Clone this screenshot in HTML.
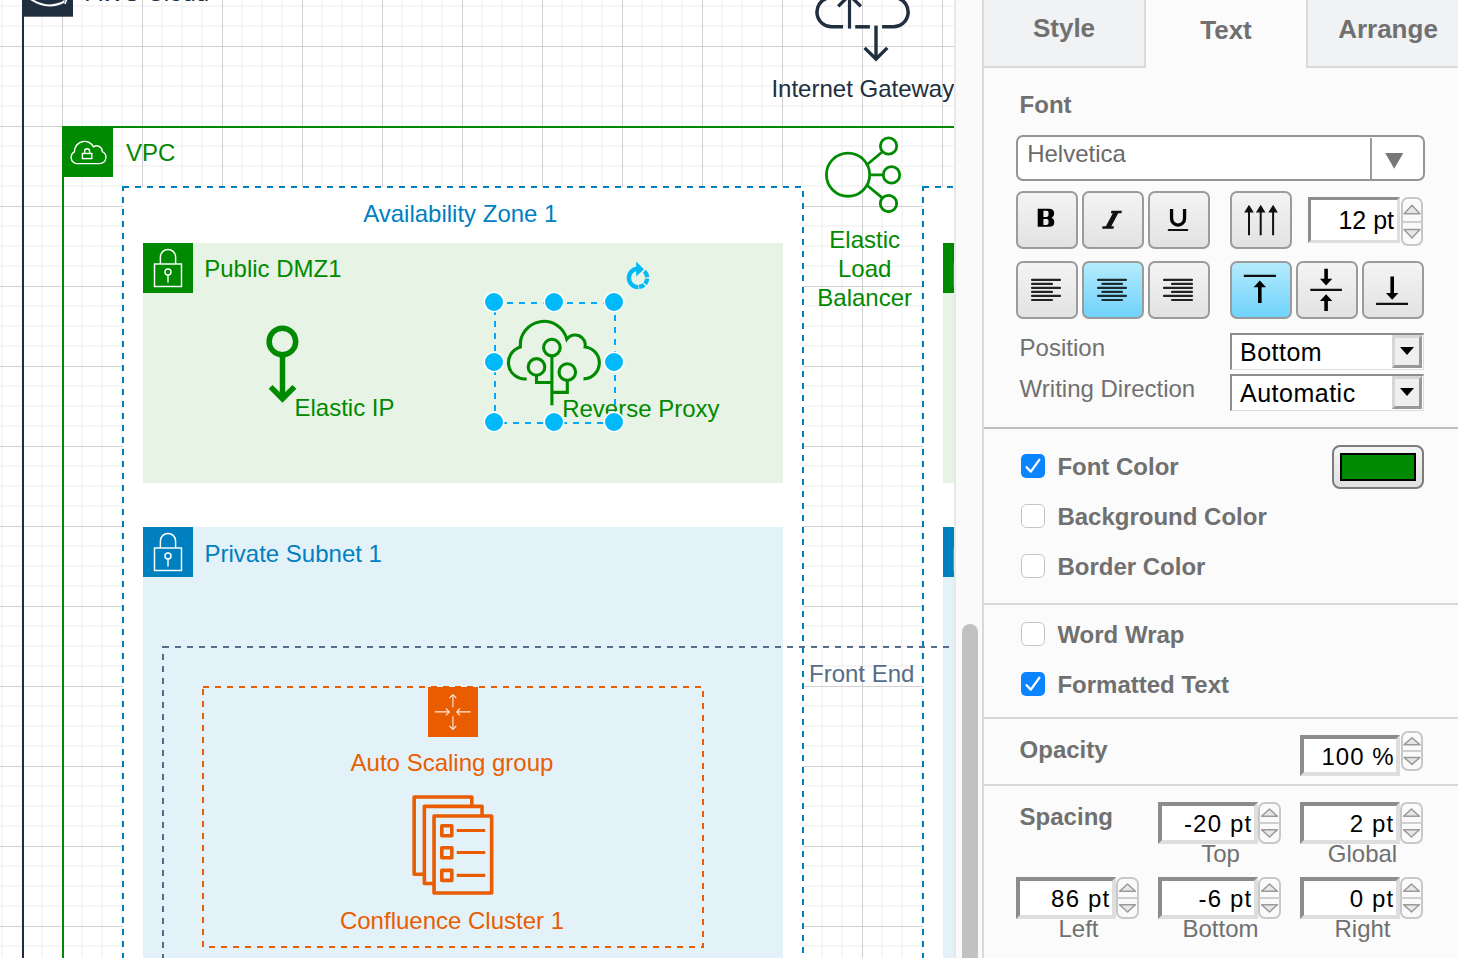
<!DOCTYPE html>
<html><head><meta charset="utf-8">
<style>
html,body{margin:0;padding:0;width:1458px;height:958px;overflow:hidden;background:#fbfbfb;font-family:"Liberation Sans", sans-serif;}
.a{position:absolute;}
svg text{font-family:"Liberation Sans", sans-serif;}
.tab{font-size:26px;font-weight:bold;color:#707070;text-align:center;line-height:0;height:0;}
.lbl{font-size:24px;color:#707070;line-height:0;height:0;white-space:nowrap}
.lblb{font-size:24px;font-weight:bold;color:#707070;line-height:0;height:0;white-space:nowrap}
.val{font-size:25px;color:#000;line-height:0;height:0;white-space:nowrap}
.sub{font-size:24px;color:#707070;line-height:0;height:0;text-align:center}
.btn{border:2px solid #9b9b9b;border-radius:7px;overflow:hidden}
.btn svg{display:block;margin:-2px}
.inp{background:#fff;border-top:3px solid #8c8c8c;border-left:3px solid #8c8c8c;border-bottom:3px solid #dedede;border-right:3px solid #dedede}
.sep{left:984px;width:474px;height:2px;background:#d8d9dd}
</style></head><body>
<svg class="a" style="left:0;top:0" width="954" height="958" viewBox="0 0 954 958">
<rect x="0" y="0" width="954" height="958" fill="#fff"/>
<path d="M2 0V958M22 0V958M42 0V958M82 0V958M102 0V958M122 0V958M162 0V958M182 0V958M202 0V958M242 0V958M262 0V958M282 0V958M322 0V958M342 0V958M362 0V958M402 0V958M422 0V958M442 0V958M482 0V958M502 0V958M522 0V958M562 0V958M582 0V958M602 0V958M642 0V958M662 0V958M682 0V958M722 0V958M742 0V958M762 0V958M802 0V958M822 0V958M842 0V958M882 0V958M902 0V958M922 0V958M0 6H954M0 26H954M0 66H954M0 86H954M0 106H954M0 146H954M0 166H954M0 186H954M0 226H954M0 246H954M0 266H954M0 306H954M0 326H954M0 346H954M0 386H954M0 406H954M0 426H954M0 466H954M0 486H954M0 506H954M0 546H954M0 566H954M0 586H954M0 626H954M0 646H954M0 666H954M0 706H954M0 726H954M0 746H954M0 786H954M0 806H954M0 826H954M0 866H954M0 886H954M0 906H954M0 946H954" stroke="#ededed" stroke-width="1" fill="none"/>
<path d="M62.5 0V958M142.5 0V958M222.5 0V958M302.5 0V958M382.5 0V958M462.5 0V958M542.5 0V958M622.5 0V958M702.5 0V958M782.5 0V958M862.5 0V958M942.5 0V958M0 46.5H954M0 126.5H954M0 206.5H954M0 286.5H954M0 366.5H954M0 446.5H954M0 526.5H954M0 606.5H954M0 686.5H954M0 766.5H954M0 846.5H954M0 926.5H954" stroke="#d0d0d0" stroke-width="1" fill="none"/>
<path d="M23 -40V958" stroke="#202f3f" stroke-width="2"/>
<rect x="22" y="-34" width="51" height="50.7" fill="#202f3f"/>
<path d="M30.5 -1Q48 10.5 64.5 1.5" stroke="#fff" stroke-width="2" fill="none"/><path d="M63 -0.5L66.5 0L65 4" stroke="#fff" stroke-width="1.4" fill="none"/>
<text x="86" y="1.2" fill="#202f3f" font-size="24">AWS Cloud</text>
<g stroke="#202f3f" stroke-width="3.5" fill="none">
<path d="M843.1 26.8H831.7A14.7 14.7 0 0 1 827.5 -2"/>
<path d="M855.2 26.8H869.9"/>
<path d="M882.1 26.8H893.4A14.7 14.7 0 0 0 897.6 -2"/>
<path d="M849.5 28.6V-6" stroke-width="3.2"/><path d="M838.2 6.4L849.5 -4.9L860.8 6.4" stroke-width="3.4"/>
<path d="M876 25.6V57" stroke-width="3.4"/><path d="M864.6 47.9L876 59L887.3 47.9" stroke-width="3.4"/>
</g>
<text x="862.8" y="96.7" fill="#202f3f" font-size="24" text-anchor="middle">Internet Gateway</text>
<path d="M63 1000V127H1000" stroke="#008a00" stroke-width="2" fill="none"/>
<rect x="62" y="126" width="51" height="51" fill="#008a00"/>
<g fill="none" stroke="#fff" stroke-width="1.4">
<path d="M76.3 163.6H99.6A6.3 6.3 0 0 0 102.3 151.6A5.6 5.6 0 0 0 93.6 146.8A10.2 10.2 0 0 0 74.4 151.9A6.3 6.3 0 0 0 76.3 163.6Z"/>
<rect x="82.4" y="153.5" width="9.4" height="5.1"/>
<path d="M84.6 153.5V151.2A2.5 2.5 0 0 1 89.6 151.2V153.5"/>
</g>
<text x="126" y="161" fill="#008a00" font-size="24" text-anchor="start">VPC</text>
<rect x="123" y="187" width="680" height="900" fill="#fff" stroke="#0080bf" stroke-width="2" stroke-dasharray="6 6"/>
<rect x="923" y="187" width="680" height="900" fill="#fff" stroke="#0080bf" stroke-width="2" stroke-dasharray="6 6"/>
<text x="460.3" y="222" fill="#0080bf" font-size="24" text-anchor="middle">Availability Zone 1</text>
<rect x="143" y="243" width="640" height="240" fill="#e7f3e5"/>
<rect x="143" y="243" width="50" height="50" fill="#008a00"/>
<g fill="none" stroke="#fff" stroke-width="1.45">
<rect x="154.5" y="264" width="27" height="22.5"/>
<path d="M160.4 264V257A7.6 7.6 0 0 1 175.6 257V264"/>
<circle cx="168" cy="272" r="3"/>
<path d="M168 275V282.5"/>
</g>
<rect x="143" y="527" width="640" height="600" fill="#e3f2f9"/>
<rect x="143" y="527" width="50" height="50" fill="#0080bf"/>
<g fill="none" stroke="#fff" stroke-width="1.45">
<rect x="154.5" y="548" width="27" height="22.5"/>
<path d="M160.4 548V541A7.6 7.6 0 0 1 175.6 541V548"/>
<circle cx="168" cy="556" r="3"/>
<path d="M168 559V566.5"/>
</g>
<rect x="943" y="243" width="640" height="240" fill="#e7f3e5"/>
<rect x="943" y="243" width="50" height="50" fill="#008a00"/>
<g fill="none" stroke="#fff" stroke-width="1.45">
<rect x="954.5" y="264" width="27" height="22.5"/>
<path d="M960.4 264V257A7.6 7.6 0 0 1 975.6 257V264"/>
<circle cx="968" cy="272" r="3"/>
<path d="M968 275V282.5"/>
</g>
<rect x="943" y="527" width="640" height="600" fill="#e3f2f9"/>
<rect x="943" y="527" width="50" height="50" fill="#0080bf"/>
<g fill="none" stroke="#fff" stroke-width="1.45">
<rect x="954.5" y="548" width="27" height="22.5"/>
<path d="M960.4 548V541A7.6 7.6 0 0 1 975.6 541V548"/>
<circle cx="968" cy="556" r="3"/>
<path d="M968 559V566.5"/>
</g>
<text x="204.2" y="276.5" fill="#008a00" font-size="24" text-anchor="start">Public DMZ1</text>
<text x="204.5" y="561.5" fill="#0080bf" font-size="24" text-anchor="start">Private Subnet 1</text>
<g stroke="#008a00" stroke-width="2.8" fill="none">
<circle cx="848.05" cy="174.65" r="21.6"/>
<circle cx="888.55" cy="146" r="8.2"/>
<circle cx="891.5" cy="174.9" r="8.2"/>
<circle cx="888.5" cy="203.55" r="8.2"/>
<path d="M866 165.5L883 151.3M869 174.9H883.5M866 184.5L883 198.3"/>
</g>
<text x="864.7" y="248.1" fill="#008a00" font-size="24" text-anchor="middle">Elastic</text>
<text x="864.7" y="277.2" fill="#008a00" font-size="24" text-anchor="middle">Load</text>
<text x="864.7" y="305.8" fill="#008a00" font-size="24" text-anchor="middle">Balancer</text>
<g stroke="#008a00" stroke-width="5.5" fill="none">
<circle cx="282.4" cy="341.5" r="13.3"/>
<path d="M282.5 354.8V397M270.6 386.9L282.5 398.8L294.4 386.9"/>
</g>
<text x="294.5" y="415.8" fill="#008a00" font-size="24" text-anchor="start">Elastic IP</text>
<g stroke="#008a00" stroke-width="3.1" fill="none">
<path d="M526.6 378.9A16.3 16.3 0 0 1 520.4 347A23.6 23.6 0 0 1 566.8 339.2A10.2 10.2 0 0 1 585.1 347A16 16 0 0 1 583.5 378.9"/>
<circle cx="551.9" cy="347.6" r="8.3"/>
<circle cx="536.5" cy="366.9" r="8.3"/>
<circle cx="567.3" cy="372.1" r="8.3"/>
<path d="M551.9 355.9V405.3M536.5 375.2V382.5H551.9M567.3 380.4V392.4H551.9"/>
</g>
<text x="562.2" y="416.6" fill="#008a00" font-size="24" text-anchor="start">Reverse Proxy</text>
<rect x="163" y="647" width="1000" height="602.5" fill="none" stroke="#556d88" stroke-width="2" stroke-dasharray="6 6"/>
<text x="809" y="682" fill="#556d88" font-size="24" text-anchor="start">Front End</text>
<rect x="203" y="687" width="500" height="260" fill="none" stroke="#e95d00" stroke-width="2" stroke-dasharray="6 6"/>
<rect x="428" y="687" width="50" height="50" fill="#e95d00"/>
<g stroke="#fbe9dc" stroke-width="1.1" fill="none">
<path d="M452.9 707.6V695M449.5 698L452.9 694.7L456.3 698"/>
<path d="M452.9 716.2V729M449.5 726L452.9 729.4L456.3 726"/>
<path d="M434.9 711.9H449M446 708.5L449.3 711.9L446 715.3"/>
<path d="M470.6 711.9H457M460 708.5L456.7 711.9L460 715.3"/>
</g>
<text x="452" y="771" fill="#e95d00" font-size="24" text-anchor="middle">Auto Scaling group</text>
<g stroke="#e95d00" stroke-width="3.6" fill="#e3f2f9" stroke-linejoin="round">
<rect x="414.15" y="797.05" width="57.7" height="77.2"/>
<rect x="424.35" y="806.35" width="57.7" height="77.2"/>
<rect x="434.05" y="816.05" width="57.6" height="76.9"/>
<rect x="441.8" y="825.8" width="10" height="10"/>
<rect x="441.8" y="847.8" width="10" height="10"/>
<rect x="441.8" y="870.4" width="10" height="10"/>
<path d="M456.7 830.5H485.2M456.7 852.5H485.2M456.7 875.3H485.2" stroke-width="3.2"/>
</g>
<text x="452" y="928.7" fill="#e95d00" font-size="24" text-anchor="middle">Confluence Cluster 1</text>
<rect x="495" y="303" width="120" height="120" fill="none" stroke="#00abff" stroke-width="2" stroke-dasharray="6 6"/>
<circle cx="494" cy="302" r="9.8" fill="#00b9f8" stroke="#fff" stroke-width="1.6"/>
<circle cx="494" cy="362" r="9.8" fill="#00b9f8" stroke="#fff" stroke-width="1.6"/>
<circle cx="494" cy="422" r="9.8" fill="#00b9f8" stroke="#fff" stroke-width="1.6"/>
<circle cx="554" cy="302" r="9.8" fill="#00b9f8" stroke="#fff" stroke-width="1.6"/>
<circle cx="554" cy="422" r="9.8" fill="#00b9f8" stroke="#fff" stroke-width="1.6"/>
<circle cx="614" cy="302" r="9.8" fill="#00b9f8" stroke="#fff" stroke-width="1.6"/>
<circle cx="614" cy="362" r="9.8" fill="#00b9f8" stroke="#fff" stroke-width="1.6"/>
<circle cx="614" cy="422" r="9.8" fill="#00b9f8" stroke="#fff" stroke-width="1.6"/>
<g stroke="#00b9f8" fill="none" stroke-width="4.3"><path d="M638.37 287.04A9.15 9.15 0 0 1 628.90 277.90A9.15 9.15 0 0 1 637.73 268.76"/><path d="M639.17 286.98A9.15 9.15 0 0 0 644.05 284.81M645.06 283.78A9.15 9.15 0 0 0 647.18 278.54M647.18 277.26A9.15 9.15 0 0 0 644.41 271.32"/></g><path d="M636.2 261.6L643.9 269.3L636.2 276.6Z" fill="#00b9f8"/>
</svg>
<div class="a" style="left:954px;top:0;width:2px;height:958px;background:#e8e8e8"></div>
<div class="a" style="left:956px;top:0;width:26px;height:958px;background:#fafafa"></div>
<div class="a" style="left:962px;top:624px;width:16px;height:400px;border-radius:8px;background:#c1c1c1"></div>
<div class="a" style="left:982px;top:0;width:2px;height:958px;background:#d9dadd"></div>
<div class="a" style="left:984px;top:0;width:474px;height:958px;background:#fbfbfb"></div>
<div class="a" style="left:984px;top:0;width:160px;height:66px;background:#f1f2f4;border-right:2px solid #d9dade;border-bottom:2px solid #d9dade"></div>
<div class="a" style="left:1306px;top:0;width:152px;height:66px;background:#f1f2f4;border-left:2px solid #d9dade;border-bottom:2px solid #d9dade"></div>
<div class="a" style="left:1016px;top:135px;width:405px;height:42px;border:2px solid #949494;border-radius:7px;background:#fff"></div>
<div class="a" style="left:1370px;top:138px;width:1.5px;height:42px;background:#9a9a9a"></div>
<svg class="a" style="left:1380px;top:148px" width="30" height="26"><path d="M5.2 5H23.3L14.2 20.8Z" fill="#777"/></svg>
<div class="a btn" style="left:1016px;top:191px;width:58px;height:54px;background:linear-gradient(#f4f4f4,#e2e2e2)"><svg width="59" height="55"><path fill-rule="evenodd" fill="#000" d="M21.7 17.7H33Q38.2 17.7 38.2 22.2Q38.2 25.6 35.6 26.8Q38.3 28 38.3 31.4Q38.3 35.8 33 35.8H21.7ZM27.4 19.8H30.8Q32.5 19.8 32.5 21.6V24.1Q32.5 25.9 30.8 25.9H27.4ZM27.4 27.9H30.8Q32.5 27.9 32.5 29.7V32.1Q32.5 33.9 30.8 33.9H27.4Z"/></svg></div>
<div class="a btn" style="left:1082px;top:191px;width:58px;height:54px;background:linear-gradient(#f4f4f4,#e2e2e2)"><svg width="59" height="55"><path fill="#111" d="M29.4 19.8H39.9L39.4 22.3H36.2L29.3 35.2H31.9L31.5 37.7H20.1L20.6 35.2H23.9L30.8 22.3H28.9Z"/></svg></div>
<div class="a btn" style="left:1148px;top:191px;width:58px;height:54px;background:linear-gradient(#f4f4f4,#e2e2e2)"><svg width="59" height="55"><path d="M23.55 17.9V27.6A6.5 6.5 0 0 0 36.55 27.6V17.9" stroke="#000" stroke-width="3.3" fill="none"/><rect x="19.7" y="38" width="20.6" height="2" rx="1" fill="#111"/></svg></div>
<div class="a btn" style="left:1230px;top:191px;width:58px;height:54px;background:linear-gradient(#f4f4f4,#e2e2e2)"><svg width="59" height="55"><g stroke="#111" stroke-width="2"><path d="M19 19V44.2M30.7 19V44.2M43.1 19V44.2"/></g><path d="M14.2 21.5L19 13.7L23.8 21.5ZM25.9 21.5L30.7 13.7L35.5 21.5ZM38.3 21.5L43.1 13.7L47.9 21.5Z" fill="#111"/></svg></div>
<div class="a inp" style="left:1308px;top:197px;width:86px;height:40px"></div>
<div class="a" style="left:1401px;top:197px;width:20px;height:47px;border:2px solid #c8c8c8;border-radius:7px;background:#fafafa;box-sizing:border-box;width:22px;height:49px"></div>
<div class="a" style="left:1402px;top:220.5px;width:20px;height:2px;background:#cfcfcf"></div>
<svg class="a" style="left:1401px;top:197px" width="22" height="49"><path d="M3.0999999999999996 16.7L11.0 8.2L18.9 16.7Z" fill="#e6e6e6" stroke="#9a9a9a" stroke-width="1.5" stroke-linejoin="round"/><path d="M3.0999999999999996 32.4L11.0 40.9L18.9 32.4Z" fill="#e6e6e6" stroke="#9a9a9a" stroke-width="1.5" stroke-linejoin="round"/></svg>
<div class="a btn" style="left:1016px;top:261px;width:58px;height:54px;background:linear-gradient(#f4f4f4,#e2e2e2)"><svg width="59" height="55"><path d="M16 18.9H44M16 22.9H36M16 26.9H44M16 30.9H36M16 34.9H44M16 39H36" stroke="#222" stroke-width="2.1" stroke-linecap="round"/></svg></div>
<div class="a btn" style="left:1082px;top:261px;width:58px;height:54px;background:linear-gradient(#b4ebfd,#6fd2fb)"><svg width="59" height="55"><path d="M16 18.9H44M20.3 22.9H40M16 26.9H44M20.3 30.9H40M16 34.9H44M20.3 39H40" stroke="#1e2a30" stroke-width="2.1" stroke-linecap="round"/></svg></div>
<div class="a btn" style="left:1148px;top:261px;width:58px;height:54px;background:linear-gradient(#f4f4f4,#e2e2e2)"><svg width="59" height="55"><path d="M16 18.9H44M24 22.9H44M16 26.9H44M24 30.9H44M16 34.9H44M24 39H44" stroke="#222" stroke-width="2.1" stroke-linecap="round"/></svg></div>
<div class="a btn" style="left:1230px;top:261px;width:58px;height:54px;background:linear-gradient(#b4ebfd,#6fd2fb)"><svg width="59" height="55"><path d="M13.8 14.9H46" stroke="#111" stroke-width="2.2"/><path d="M29.8 25V42" stroke="#000" stroke-width="3.6"/><path d="M23.6 26.3L29.8 19.5L36 26.3Z" fill="#000"/></svg></div>
<div class="a btn" style="left:1296px;top:261px;width:58px;height:54px;background:linear-gradient(#f4f4f4,#e2e2e2)"><svg width="59" height="55"><path d="M14.3 28.9H45.9" stroke="#111" stroke-width="2.2"/><path d="M30.1 7.8V19M30.1 39V50" stroke="#000" stroke-width="3.6"/><path d="M23.9 17.7L30.1 24.5L36.3 17.7ZM23.9 40L30.1 33.2L36.3 40Z" fill="#000"/></svg></div>
<div class="a btn" style="left:1362px;top:261px;width:58px;height:54px;background:linear-gradient(#f4f4f4,#e2e2e2)"><svg width="59" height="55"><path d="M14.1 42.9H46" stroke="#111" stroke-width="2.2"/><path d="M30.2 15.6V33" stroke="#000" stroke-width="3.6"/><path d="M24 32L30.2 38.8L36.4 32Z" fill="#000"/></svg></div>
<div class="a" style="left:1230px;top:333px;width:191px;height:34px;border-top:2px solid #8d8d8d;border-left:2px solid #8d8d8d;border-bottom:1px solid #dcdcdc;border-right:1px solid #dcdcdc;background:#fff"></div>
<div class="a" style="left:1392px;top:335px;width:24px;height:27px;background:#efefef;border-top:3px solid #d6d6d6;border-left:3px solid #d6d6d6;border-bottom:3px solid #989898;border-right:3px solid #989898"></div>
<svg class="a" style="left:1400px;top:347px" width="14" height="8"><path d="M0 0H14L7 8Z" fill="#000"/></svg>

<div class="a" style="left:1230px;top:374px;width:191px;height:34px;border-top:2px solid #8d8d8d;border-left:2px solid #8d8d8d;border-bottom:1px solid #dcdcdc;border-right:1px solid #dcdcdc;background:#fff"></div>
<div class="a" style="left:1392px;top:376px;width:24px;height:27px;background:#efefef;border-top:3px solid #d6d6d6;border-left:3px solid #d6d6d6;border-bottom:3px solid #989898;border-right:3px solid #989898"></div>
<svg class="a" style="left:1400px;top:388px" width="14" height="8"><path d="M0 0H14L7 8Z" fill="#000"/></svg>

<div class="a sep" style="top:427px;background:#bebebe"></div>
<svg class="a" style="left:1021px;top:454px" width="24" height="24"><rect x="0" y="0" width="24" height="24" rx="5" fill="#0a84ff"/><path d="M5.6 13.2L9.8 17.6L18.3 5.8" stroke="#fff" stroke-width="2.3" fill="none" stroke-linecap="round" stroke-linejoin="round"/></svg>
<svg class="a" style="left:1021px;top:504px" width="24" height="24"><rect x="0.5" y="0.5" width="23" height="23" rx="5" fill="#fff" stroke="#c4c4c4" stroke-width="1"/></svg>
<svg class="a" style="left:1021px;top:554px" width="24" height="24"><rect x="0.5" y="0.5" width="23" height="23" rx="5" fill="#fff" stroke="#c4c4c4" stroke-width="1"/></svg>
<div class="a" style="left:1332px;top:445px;width:88px;height:40px;border:2px solid #7c7c7c;border-radius:8px;background:linear-gradient(#f4f4f4,#e0e0e0)"></div>
<div class="a" style="left:1340px;top:453px;width:72px;height:24px;border:2px solid #000;background:#008a00"></div>
<div class="a sep" style="top:603px"></div>
<svg class="a" style="left:1021px;top:622px" width="24" height="24"><rect x="0.5" y="0.5" width="23" height="23" rx="5" fill="#fff" stroke="#c4c4c4" stroke-width="1"/></svg>
<svg class="a" style="left:1021px;top:672px" width="24" height="24"><rect x="0" y="0" width="24" height="24" rx="5" fill="#0a84ff"/><path d="M5.6 13.2L9.8 17.6L18.3 5.8" stroke="#fff" stroke-width="2.3" fill="none" stroke-linecap="round" stroke-linejoin="round"/></svg>
<div class="a sep" style="top:717px"></div>
<div class="a inp" style="left:1300px;top:735px;width:92px;height:33px;border-width:4px"></div>
<div class="a" style="left:1401px;top:731px;width:20px;height:38px;border:2px solid #c8c8c8;border-radius:7px;background:#fafafa;box-sizing:border-box;width:22px;height:40px"></div>
<div class="a" style="left:1402px;top:750.0px;width:20px;height:2px;background:#cfcfcf"></div>
<svg class="a" style="left:1401px;top:731px" width="22" height="40"><path d="M3.0999999999999996 13.63265306122449L11.0 6.693877551020407L18.9 13.63265306122449Z" fill="#e6e6e6" stroke="#9a9a9a" stroke-width="1.5" stroke-linejoin="round"/><path d="M3.0999999999999996 26.448979591836736L11.0 33.38775510204081L18.9 26.448979591836736Z" fill="#e6e6e6" stroke="#9a9a9a" stroke-width="1.5" stroke-linejoin="round"/></svg>
<div class="a sep" style="top:784px"></div>
<div class="a inp" style="left:1158px;top:802px;width:92px;height:34px;border-width:4px"></div>
<div class="a" style="left:1258px;top:802px;width:21px;height:40px;border:2px solid #c8c8c8;border-radius:7px;background:#fafafa;box-sizing:border-box;width:23px;height:42px"></div>
<div class="a" style="left:1259px;top:822.0px;width:21px;height:2px;background:#cfcfcf"></div>
<svg class="a" style="left:1258px;top:802px" width="23" height="42"><path d="M3.5999999999999996 14.314285714285715L11.5 7.0285714285714285L19.4 14.314285714285715Z" fill="#e6e6e6" stroke="#9a9a9a" stroke-width="1.5" stroke-linejoin="round"/><path d="M3.5999999999999996 27.771428571428572L11.5 35.05714285714286L19.4 27.771428571428572Z" fill="#e6e6e6" stroke="#9a9a9a" stroke-width="1.5" stroke-linejoin="round"/></svg>
<div class="a inp" style="left:1300px;top:802px;width:92px;height:34px;border-width:4px"></div>
<div class="a" style="left:1400px;top:802px;width:21px;height:40px;border:2px solid #c8c8c8;border-radius:7px;background:#fafafa;box-sizing:border-box;width:23px;height:42px"></div>
<div class="a" style="left:1401px;top:822.0px;width:21px;height:2px;background:#cfcfcf"></div>
<svg class="a" style="left:1400px;top:802px" width="23" height="42"><path d="M3.5999999999999996 14.314285714285715L11.5 7.0285714285714285L19.4 14.314285714285715Z" fill="#e6e6e6" stroke="#9a9a9a" stroke-width="1.5" stroke-linejoin="round"/><path d="M3.5999999999999996 27.771428571428572L11.5 35.05714285714286L19.4 27.771428571428572Z" fill="#e6e6e6" stroke="#9a9a9a" stroke-width="1.5" stroke-linejoin="round"/></svg>
<div class="a inp" style="left:1016px;top:877px;width:92px;height:34px;border-width:4px"></div>
<div class="a" style="left:1116px;top:877px;width:21px;height:40px;border:2px solid #c8c8c8;border-radius:7px;background:#fafafa;box-sizing:border-box;width:23px;height:42px"></div>
<div class="a" style="left:1117px;top:897.0px;width:21px;height:2px;background:#cfcfcf"></div>
<svg class="a" style="left:1116px;top:877px" width="23" height="42"><path d="M3.5999999999999996 14.314285714285715L11.5 7.0285714285714285L19.4 14.314285714285715Z" fill="#e6e6e6" stroke="#9a9a9a" stroke-width="1.5" stroke-linejoin="round"/><path d="M3.5999999999999996 27.771428571428572L11.5 35.05714285714286L19.4 27.771428571428572Z" fill="#e6e6e6" stroke="#9a9a9a" stroke-width="1.5" stroke-linejoin="round"/></svg>
<div class="a inp" style="left:1158px;top:877px;width:92px;height:34px;border-width:4px"></div>
<div class="a" style="left:1258px;top:877px;width:21px;height:40px;border:2px solid #c8c8c8;border-radius:7px;background:#fafafa;box-sizing:border-box;width:23px;height:42px"></div>
<div class="a" style="left:1259px;top:897.0px;width:21px;height:2px;background:#cfcfcf"></div>
<svg class="a" style="left:1258px;top:877px" width="23" height="42"><path d="M3.5999999999999996 14.314285714285715L11.5 7.0285714285714285L19.4 14.314285714285715Z" fill="#e6e6e6" stroke="#9a9a9a" stroke-width="1.5" stroke-linejoin="round"/><path d="M3.5999999999999996 27.771428571428572L11.5 35.05714285714286L19.4 27.771428571428572Z" fill="#e6e6e6" stroke="#9a9a9a" stroke-width="1.5" stroke-linejoin="round"/></svg>
<div class="a inp" style="left:1300px;top:877px;width:92px;height:34px;border-width:4px"></div>
<div class="a" style="left:1400px;top:877px;width:21px;height:40px;border:2px solid #c8c8c8;border-radius:7px;background:#fafafa;box-sizing:border-box;width:23px;height:42px"></div>
<div class="a" style="left:1401px;top:897.0px;width:21px;height:2px;background:#cfcfcf"></div>
<svg class="a" style="left:1400px;top:877px" width="23" height="42"><path d="M3.5999999999999996 14.314285714285715L11.5 7.0285714285714285L19.4 14.314285714285715Z" fill="#e6e6e6" stroke="#9a9a9a" stroke-width="1.5" stroke-linejoin="round"/><path d="M3.5999999999999996 27.771428571428572L11.5 35.05714285714286L19.4 27.771428571428572Z" fill="#e6e6e6" stroke="#9a9a9a" stroke-width="1.5" stroke-linejoin="round"/></svg>
<svg class="a" style="left:0;top:0;pointer-events:none" width="1458" height="958"><text x="1064" y="37.1" font-size="26" font-weight="bold" fill="#707070" text-anchor="middle">Style</text><text x="1226" y="39.3" font-size="26" font-weight="bold" fill="#707070" text-anchor="middle">Text</text><text x="1388" y="37.5" font-size="26" font-weight="bold" fill="#707070" text-anchor="middle">Arrange</text><text x="1019.6" y="112.7" font-size="24" font-weight="bold" fill="#707070" text-anchor="start">Font</text><text x="1027.2" y="162.4" font-size="24" font-weight="normal" fill="#6a6a6a" text-anchor="start">Helvetica</text><text x="1394" y="229.1" font-size="25" font-weight="normal" fill="#000" text-anchor="end">12 pt</text><text x="1019.6" y="356" font-size="24" font-weight="normal" fill="#707070" text-anchor="start">Position</text><text x="1019.6" y="397" font-size="24" font-weight="normal" fill="#707070" text-anchor="start">Writing Direction</text><text x="1240" y="361" font-size="25" font-weight="normal" fill="#000" text-anchor="start" letter-spacing="0.5">Bottom</text><text x="1240" y="402" font-size="25" font-weight="normal" fill="#000" text-anchor="start" letter-spacing="0.5">Automatic</text><text x="1057.4" y="475" font-size="24" font-weight="bold" fill="#707070" text-anchor="start">Font Color</text><text x="1057.4" y="525" font-size="24" font-weight="bold" fill="#707070" text-anchor="start">Background Color</text><text x="1057.4" y="575" font-size="24" font-weight="bold" fill="#707070" text-anchor="start">Border Color</text><text x="1057.4" y="642.5" font-size="24" font-weight="bold" fill="#707070" text-anchor="start">Word Wrap</text><text x="1057.4" y="692.5" font-size="24" font-weight="bold" fill="#707070" text-anchor="start">Formatted Text</text><text x="1019.6" y="758" font-size="24" font-weight="bold" fill="#707070" text-anchor="start">Opacity</text><text x="1394.5" y="765" font-size="24" font-weight="normal" fill="#000" text-anchor="end" letter-spacing="1.0">100 %</text><text x="1019.6" y="825" font-size="24" font-weight="bold" fill="#707070" text-anchor="start">Spacing</text><text x="1252.5" y="832" font-size="24" font-weight="normal" fill="#000" text-anchor="end" letter-spacing="1.2">-20 pt</text><text x="1220.5" y="862" font-size="24" font-weight="normal" fill="#707070" text-anchor="middle">Top</text><text x="1394.5" y="832" font-size="24" font-weight="normal" fill="#000" text-anchor="end" letter-spacing="1.2">2 pt</text><text x="1362.5" y="862" font-size="24" font-weight="normal" fill="#707070" text-anchor="middle">Global</text><text x="1110.5" y="907" font-size="24" font-weight="normal" fill="#000" text-anchor="end" letter-spacing="1.2">86 pt</text><text x="1078.5" y="937" font-size="24" font-weight="normal" fill="#707070" text-anchor="middle">Left</text><text x="1252.5" y="907" font-size="24" font-weight="normal" fill="#000" text-anchor="end" letter-spacing="1.2">-6 pt</text><text x="1220.5" y="937" font-size="24" font-weight="normal" fill="#707070" text-anchor="middle">Bottom</text><text x="1394.5" y="907" font-size="24" font-weight="normal" fill="#000" text-anchor="end" letter-spacing="1.2">0 pt</text><text x="1362.5" y="937" font-size="24" font-weight="normal" fill="#707070" text-anchor="middle">Right</text></svg>
</body></html>
